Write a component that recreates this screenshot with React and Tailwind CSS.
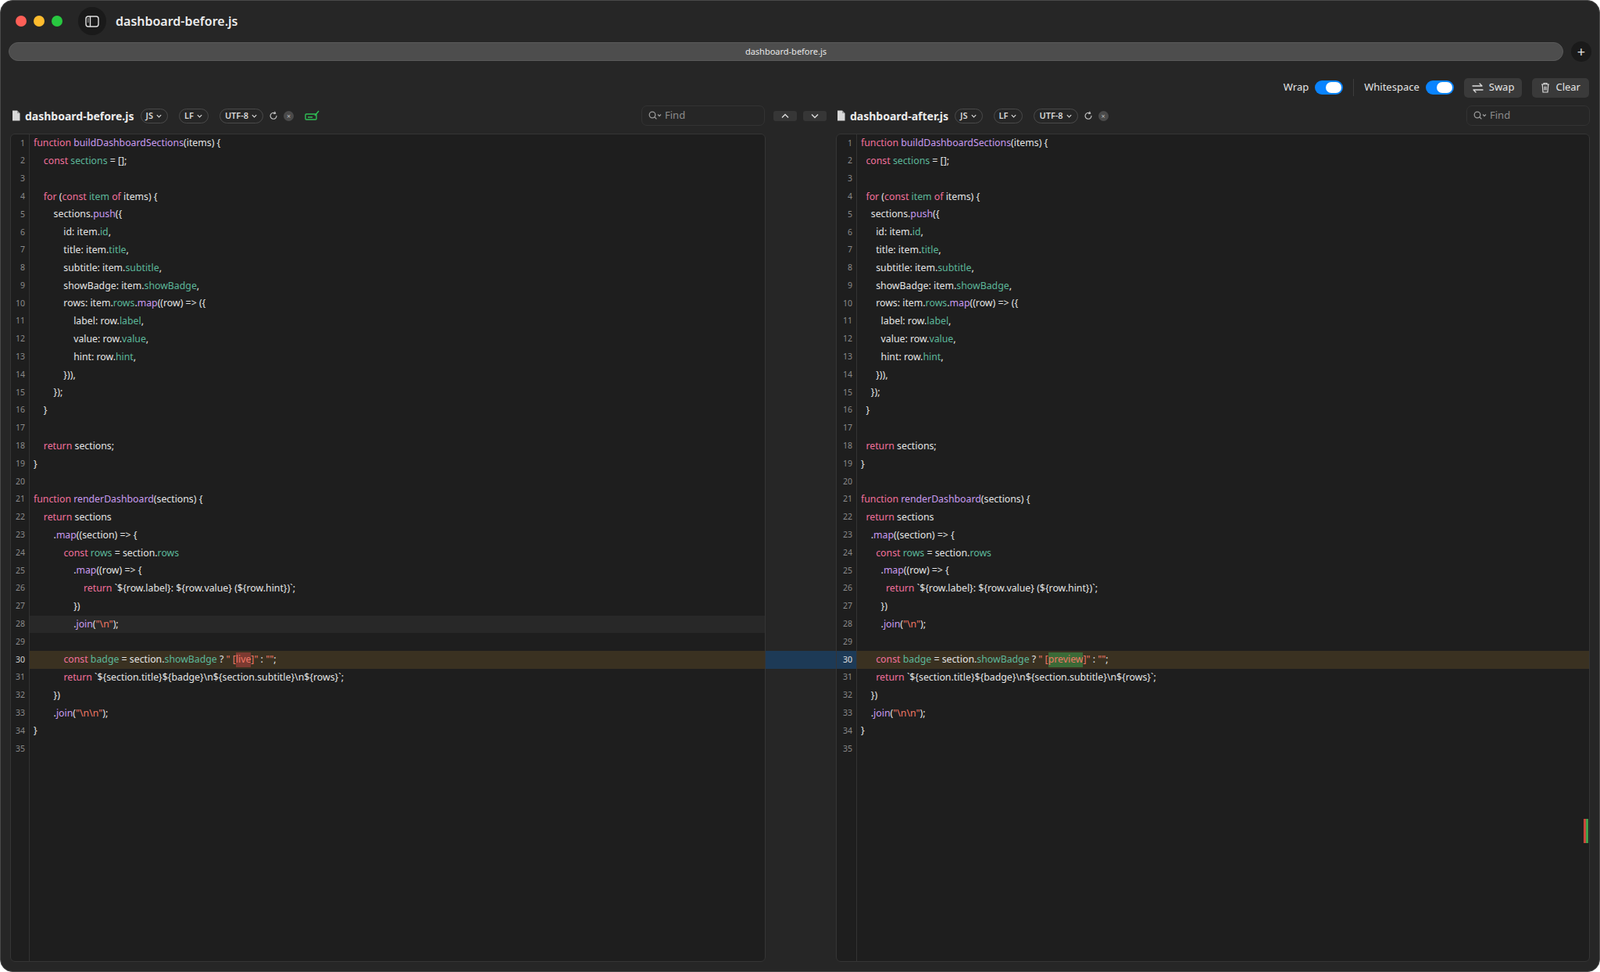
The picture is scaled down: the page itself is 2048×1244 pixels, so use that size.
import React from "react";

const C = {
  k: "text-[#f2709c]",
  f: "text-[#c99bf0]",
  g: "text-[#5cb79a]",
  s: "text-[#f07866]",
  p: "text-[#e4e4e4]",
  r: "text-[#f07866] bg-[#7c3a31]",
  n: "text-[#f07866] bg-[#3b6a37]",
};

function lines(ind, word, hl) {
  const sp = (n) => " ".repeat(n * ind);
  return [
    [["k", "function"], ["p", " "], ["f", "buildDashboardSections"], ["p", "(items) {"]],
    [["p", sp(1)], ["k", "const"], ["p", " "], ["g", "sections"], ["p", " = [];"]],
    [],
    [["p", sp(1)], ["k", "for"], ["p", " ("], ["k", "const"], ["p", " "], ["g", "item"], ["p", " "], ["k", "of"], ["p", " items) {"]],
    [["p", sp(2) + "sections."], ["f", "push"], ["p", "({"]],
    [["p", sp(3) + "id: item."], ["g", "id"], ["p", ","]],
    [["p", sp(3) + "title: item."], ["g", "title"], ["p", ","]],
    [["p", sp(3) + "subtitle: item."], ["g", "subtitle"], ["p", ","]],
    [["p", sp(3) + "showBadge: item."], ["g", "showBadge"], ["p", ","]],
    [["p", sp(3) + "rows: item."], ["g", "rows"], ["p", "."], ["f", "map"], ["p", "((row) => ({"]],
    [["p", sp(4) + "label: row."], ["g", "label"], ["p", ","]],
    [["p", sp(4) + "value: row."], ["g", "value"], ["p", ","]],
    [["p", sp(4) + "hint: row."], ["g", "hint"], ["p", ","]],
    [["p", sp(3) + "})),"]],
    [["p", sp(2) + "});"]],
    [["p", sp(1) + "}"]],
    [],
    [["p", sp(1)], ["k", "return"], ["p", " sections;"]],
    [["p", "}"]],
    [],
    [["k", "function"], ["p", " "], ["f", "renderDashboard"], ["p", "(sections) {"]],
    [["p", sp(1)], ["k", "return"], ["p", " sections"]],
    [["p", sp(2) + "."], ["f", "map"], ["p", "((section) => {"]],
    [["p", sp(3)], ["k", "const"], ["p", " "], ["g", "rows"], ["p", " = section."], ["g", "rows"]],
    [["p", sp(4) + "."], ["f", "map"], ["p", "((row) => {"]],
    [["p", sp(5)], ["k", "return"], ["p", " `${row.label}: ${row.value} (${row.hint})`;"]],
    [["p", sp(4) + "})"]],
    [["p", sp(4) + "."], ["f", "join"], ["p", "("], ["s", '"\\n"'], ["p", ");"]],
    [],
    [["p", sp(3)], ["k", "const"], ["p", " "], ["g", "badge"], ["p", " = section."], ["g", "showBadge"], ["p", " ? "], ["s", '" ['], [hl, word], ["s", ']"'], ["p", " : "], ["s", '""'], ["p", ";"]],
    [["p", sp(3)], ["k", "return"], ["p", " `${section.title}${badge}\\n${section.subtitle}\\n${rows}`;"]],
    [["p", sp(2) + "})"]],
    [["p", sp(2) + "."], ["f", "join"], ["p", "("], ["s", '"\\n\\n"'], ["p", ");"]],
    [["p", "}"]],
    [],
  ];
}

const Chevron = () => (
  <svg width="9" height="9" viewBox="0 0 10 10" fill="none" stroke="currentColor" strokeWidth="1.3"><path d="M2 3.5l3 3 3-3" /></svg>
);

function Pill({ children }) {
  return (
    <div className="flex items-center gap-[3px] h-[19px] px-[6px] rounded-full border border-[#4a4a4a] text-[11px] font-semibold text-[#d8d8d8]">
      {children}
      <Chevron />
    </div>
  );
}

const FileIcon = () => (
  <svg width="11" height="14" viewBox="0 0 11 14"><path d="M1 0.5h6l3.5 3.5v9.5h-9.5z" fill="#d8d8d8" /><path d="M7 0.5v3.5h3.5" fill="#9a9a9a" /></svg>
);

const Reload = () => (
  <svg width="14" height="14" viewBox="0 0 16 16" fill="none" stroke="#bdbdbd" strokeWidth="1.4" strokeLinecap="round"><path d="M12.5 8.5a4.5 4.5 0 1 1-2-3.9" /><path d="M10 2.5l1 2.3-2.4.6" /></svg>
);

const XCircle = () => (
  <div className="w-[13px] h-[13px] rounded-full bg-[#4a4a4a] flex items-center justify-center text-[9px] leading-none text-[#bbb]">×</div>
);

function Find() {
  return (
    <div className="flex items-center gap-[4px] w-[158px] h-[26px] rounded-[7px] border border-[#333] px-[8px] text-[13px] text-[#8c8c8c]">
      <svg width="17" height="12" viewBox="0 0 17 12" fill="none" stroke="#9a9a9a" strokeWidth="1.3"><circle cx="5" cy="5" r="3.8" /><path d="M7.8 7.8l2.6 2.6M12 4.5l2 2 2-2" /></svg>
      <span>Find</span>
    </div>
  );
}

function Toggle() {
  return (
    <div className="w-[36px] h-[18px] rounded-full bg-[#0a84ff] flex items-center justify-end px-[2px]">
      <div className="w-[20px] h-[14px] rounded-full bg-white" />
    </div>
  );
}

function Panel({ data, hl28, gutterW, gutterHl }) {
  return (
    <div className="flex-1 flex rounded-[6px] border border-[#353535] bg-[#1e1e1e] overflow-hidden font-['Liberation_Mono'] text-[12.3px]">
      <div className="flex flex-col border-r border-[#333]" style={{ width: gutterW }}>
        {data.map((_, i) => (
          <div key={i} className={`h-[22.8px] flex items-center justify-end pr-[5px] text-[10.5px] font-['DejaVu_Sans_Mono'] ${i === 29 ? (gutterHl ? "bg-[#1d3a56] text-[#e0e0e0]" : "text-[#d0d0d0]") : "text-[#8a8a8a]"}`}>
            {i + 1}
          </div>
        ))}
      </div>
      <div className="flex-1 flex flex-col">
        {data.map((toks, i) => (
          <div key={i} className={`h-[22.8px] flex items-center whitespace-pre pl-[5px] font-['Liberation_Mono'] ${i === 29 ? "bg-[#3a3121]" : i === 27 && hl28 ? "bg-[#282828]" : ""}`}>
            {toks.map(([c, t], j) => (
              <span key={j} className={C[c]}>{t}</span>
            ))}
          </div>
        ))}
      </div>
    </div>
  );
}

export default function App() {
  const left = lines(4, "live", "r");
  const right = lines(2, "preview", "n");
  return (
    <div className="w-[2048px] h-[1244px] bg-white font-['Inter']">
      <div className="h-full rounded-[16px] border border-[#4a4a4a] bg-[#262626] flex flex-col overflow-hidden">
        <div className="h-[52px] flex items-center pl-[19px] shrink-0">
          <div className="flex gap-[9px]">
            <div className="w-[14px] h-[14px] rounded-full bg-[#fe5f57]" />
            <div className="w-[14px] h-[14px] rounded-full bg-[#febc2e]" />
            <div className="w-[14px] h-[14px] rounded-full bg-[#28c840]" />
          </div>
          <div className="ml-[20px] w-[36px] h-[36px] rounded-full bg-[#1a1a1a] flex items-center justify-center">
            <svg width="18" height="15" viewBox="0 0 18 15" fill="none" stroke="#e0e0e0" strokeWidth="1.4"><rect x="1" y="1" width="16" height="13" rx="3" /><path d="M6.5 1v13" /><path d="M3 4h1.5M3 6h1.5M3 8h1.5" strokeWidth="1" /></svg>
          </div>
          <div className="ml-[12px] text-[16px] font-semibold text-[#ececec]">dashboard-before.js</div>
        </div>
        <div className="flex items-center gap-[10px] px-[10px] shrink-0">
          <div className="flex-1 h-[24px] rounded-full bg-[#4d4d4d] border border-[#5a5a5a] flex items-center justify-center text-[11px] text-[#e8e8e8]">dashboard-before.js</div>
          <div className="w-[26px] h-[26px] rounded-full bg-[#1a1a1a] flex items-center justify-center text-[#e0e0e0] text-[18px] leading-none">+</div>
        </div>
        <div className="mt-[17px] h-[32px] flex items-center justify-end pr-[13px] gap-[8px] text-[13px] text-[#e4e4e4] shrink-0">
          <span>Wrap</span>
          <Toggle />
          <div className="w-px h-[22px] bg-[#3d3d3d] mx-[5px]" />
          <span>Whitespace</span>
          <Toggle />
          <div className="ml-[5px] h-[25px] px-[10px] rounded-[5px] bg-[#3a3a3a] flex items-center gap-[7px]">
            <svg width="15" height="13" viewBox="0 0 15 13" fill="none" stroke="#ddd" strokeWidth="1.3" strokeLinecap="round"><path d="M1 4h12M10 1l3 3M14 9H2M5 12l-3-3" /></svg>
            Swap
          </div>
          <div className="ml-[5px] h-[25px] px-[11px] rounded-[5px] bg-[#3a3a3a] flex items-center gap-[7px]">
            <svg width="12" height="14" viewBox="0 0 12 14" fill="none" stroke="#ddd" strokeWidth="1.2"><path d="M1 3h10M4 3V1.5h4V3M2.2 3l.8 10h6l.8-10M5 5.5v5M7 5.5v5" /></svg>
            Clear
          </div>
        </div>
        <div className="h-[30px] mt-[5px] flex items-center px-[12px] shrink-0">
          <div className="flex-1 flex items-center gap-[6px] pl-[2px]">
            <FileIcon />
            <span className="text-[14px] font-bold text-[#ececec] mr-[2px]">dashboard-before.js</span>
            <Pill>JS</Pill>
            <div className="w-[2px]" />
            <Pill>LF</Pill>
            <div className="w-[2px]" />
            <Pill>UTF-8</Pill>
            <Reload />
            <XCircle />
            <svg className="ml-[8px]" width="20" height="14" viewBox="0 0 20 14" fill="none" stroke="#2fbf55" strokeWidth="1.4"><rect x="1" y="5" width="14" height="7" rx="1" /><path d="M4 9h6M13 7l5-6" /></svg>
            <div className="flex-1" />
            <Find />
          </div>
          <div className="w-[90px] flex items-center justify-center gap-[8px]">
            <div className="w-[30px] h-[13px] rounded-[3px] bg-[#363636] flex items-center justify-center text-[#ddd]"><svg width="10" height="7" viewBox="0 0 10 7" fill="none" stroke="currentColor" strokeWidth="1.4"><path d="M1 5.5l4-4 4 4" /></svg></div>
            <div className="w-[30px] h-[13px] rounded-[3px] bg-[#363636] flex items-center justify-center text-[#ddd]"><svg width="10" height="7" viewBox="0 0 10 7" fill="none" stroke="currentColor" strokeWidth="1.4"><path d="M1 1.5l4 4 4-4" /></svg></div>
          </div>
          <div className="flex-1 flex items-center gap-[6px] pl-[2px]">
            <FileIcon />
            <span className="text-[14px] font-bold text-[#ececec] mr-[2px]">dashboard-after.js</span>
            <Pill>JS</Pill>
            <div className="w-[2px]" />
            <Pill>LF</Pill>
            <div className="w-[2px]" />
            <Pill>UTF-8</Pill>
            <Reload />
            <XCircle />
            <div className="flex-1" />
            <Find />
          </div>
        </div>
        <div className="mt-[8px] h-[1060px] flex px-[12px]">
          <Panel data={left} hl28 gutterW={24} />
          <div className="w-[90px] flex flex-col pt-[1px]">
            <div className="h-[661.2px]" />
            <div className="h-[22.8px] bg-[#1d3a56]" />
          </div>
          <div className="flex-1 flex relative">
            <Panel data={right} gutterW={26} gutterHl />
            <div className="absolute right-[2px] top-[877px] flex">
              <div className="w-[3px] h-[31px] bg-[#c8473b]" />
              <div className="w-[3px] h-[31px] bg-[#3fa04a]" />
            </div>
          </div>
        </div>
      </div>
    </div>
  );
}
